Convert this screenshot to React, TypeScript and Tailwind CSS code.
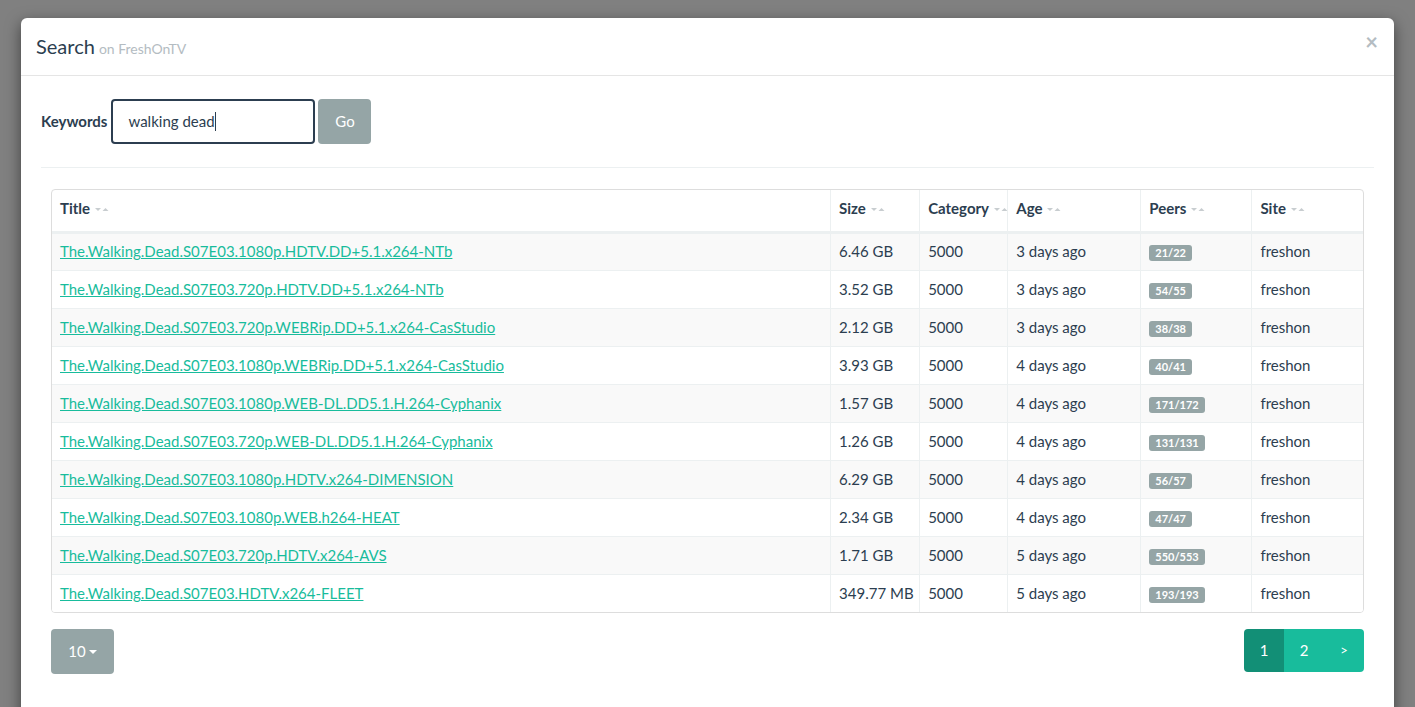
import React from "react";

// <---------- Sonuç satırları ---------------->
interface ResultRow {
  title: string;
  size: string;
  category: string;
  age: string;
  peers: string;
  site: string;
}

const rows: ResultRow[] = [
  { title: "The.Walking.Dead.S07E03.1080p.HDTV.DD+5.1.x264-NTb", size: "6.46 GB", category: "5000", age: "3 days ago", peers: "21/22", site: "freshon" },
  { title: "The.Walking.Dead.S07E03.720p.HDTV.DD+5.1.x264-NTb", size: "3.52 GB", category: "5000", age: "3 days ago", peers: "54/55", site: "freshon" },
  { title: "The.Walking.Dead.S07E03.720p.WEBRip.DD+5.1.x264-CasStudio", size: "2.12 GB", category: "5000", age: "3 days ago", peers: "38/38", site: "freshon" },
  { title: "The.Walking.Dead.S07E03.1080p.WEBRip.DD+5.1.x264-CasStudio", size: "3.93 GB", category: "5000", age: "4 days ago", peers: "40/41", site: "freshon" },
  { title: "The.Walking.Dead.S07E03.1080p.WEB-DL.DD5.1.H.264-Cyphanix", size: "1.57 GB", category: "5000", age: "4 days ago", peers: "171/172", site: "freshon" },
  { title: "The.Walking.Dead.S07E03.720p.WEB-DL.DD5.1.H.264-Cyphanix", size: "1.26 GB", category: "5000", age: "4 days ago", peers: "131/131", site: "freshon" },
  { title: "The.Walking.Dead.S07E03.1080p.HDTV.x264-DIMENSION", size: "6.29 GB", category: "5000", age: "4 days ago", peers: "56/57", site: "freshon" },
  { title: "The.Walking.Dead.S07E03.1080p.WEB.h264-HEAT", size: "2.34 GB", category: "5000", age: "4 days ago", peers: "47/47", site: "freshon" },
  { title: "The.Walking.Dead.S07E03.720p.HDTV.x264-AVS", size: "1.71 GB", category: "5000", age: "5 days ago", peers: "550/553", site: "freshon" },
  { title: "The.Walking.Dead.S07E03.HDTV.x264-FLEET", size: "349.77 MB", category: "5000", age: "5 days ago", peers: "193/193", site: "freshon" },
];
// <----------/  ----->

const columns = [
  { label: "Title", width: "w-[778px]" },
  { label: "Size", width: "w-[89px]" },
  { label: "Category", width: "w-[88px]" },
  { label: "Age", width: "w-[133px]" },
  { label: "Peers", width: "w-[111px]" },
  { label: "Site", width: "w-[111px]" },
];

function SortIcon() {
  return (
    <svg width="14" height="7" viewBox="0 0 14 7" className="inline-block ml-[5px] align-middle -mt-[2px]">
      <path d="M0 2 L6 2 L3 5 Z" fill="#c8cdd0" />
      <path d="M7.5 5 L13.5 5 L10.5 2 Z" fill="#c8cdd0" />
    </svg>
  );
}

function App() {
  return (
    <div
      className="h-[707px] w-[1415px] overflow-hidden bg-[#808080] pt-[18px] px-[21px] text-[#2c3e50]"
      style={{ fontFamily: "Lato, 'Open Sans', sans-serif" }}
    >
      <div className="bg-white rounded-[6px] shadow-[0_5px_15px_rgba(0,0,0,0.5)] h-[720px]">
        {/* header */}
        <div className="flex items-center justify-between px-[15px] h-[58px] border-b border-[#e5e5e5]">
          <div className="text-[20px] leading-[27px] mt-[1px]">
            Search<span className="text-[14px] text-[#b4bcc2] ml-[4px]">on FreshOnTV</span>
          </div>
          <button className="text-[22px] font-bold leading-none text-[#b4bcc2] -mt-[10px] mr-[1px]">×</button>
        </div>

        {/* body */}
        <div className="px-[20px] pt-[23px]">
          <div className="flex items-center">
            <label className="text-[15px] font-bold mr-[4px]">Keywords</label>
            <div className="w-[204px] h-[45px] border-2 border-[#2c3e50] rounded-[4px] flex items-center px-[15px] text-[15px]">
              walking dead<span className="inline-block w-px h-[19px] bg-[#2c3e50]" />
            </div>
            <button className="ml-[3px] w-[53px] h-[45px] rounded-[4px] bg-[#95a5a6] text-white text-[15px]">Go</button>
          </div>

          <div className="mt-[23px] border-t border-[#ecf0f1]" />

          <div className="pt-[21px] px-[10px]">
            <div className="border border-[#dddddd] rounded-[4px] overflow-hidden">
              <table className="w-full table-fixed border-collapse text-[15px]">
                <colgroup>
                  {columns.map((c) => (
                    <col key={c.label} className={c.width} />
                  ))}
                </colgroup>
                <thead>
                  <tr className="h-[42px] border-b-[3px] border-[#ecf0f1]">
                    {columns.map((c, i) => (
                      <th
                        key={c.label}
                        className={
                          "text-left font-bold px-[8px] pb-[4px] whitespace-nowrap overflow-hidden " +
                          (i > 0 ? "border-l border-[#ecf0f1]" : "")
                        }
                      >
                        {c.label}
                        <SortIcon />
                      </th>
                    ))}
                  </tr>
                </thead>
                <tbody>
                  {rows.map((r, idx) => (
                    <tr
                      key={idx}
                      className={
                        "h-[38px] " +
                        (idx > 0 ? "border-t border-[#ecf0f1] " : "") +
                        (idx % 2 === 0 ? "bg-[#f9f9f9]" : "bg-white")
                      }
                    >
                      <td className="px-[8px] whitespace-nowrap overflow-hidden">
                        <a href="#" className="text-[#18bc9c] underline">{r.title}</a>
                      </td>
                      <td className="px-[8px] border-l border-[#ecf0f1] whitespace-nowrap">{r.size}</td>
                      <td className="px-[8px] border-l border-[#ecf0f1]">{r.category}</td>
                      <td className="px-[8px] border-l border-[#ecf0f1]">{r.age}</td>
                      <td className="px-[8px] border-l border-[#ecf0f1]">
                        <span className="inline-block bg-[#95a5a6] text-white text-[11px] font-bold leading-[16px] px-[6px] rounded-[3px] mt-[2px]">
                          {r.peers}
                        </span>
                      </td>
                      <td className="px-[8px] border-l border-[#ecf0f1]">{r.site}</td>
                    </tr>
                  ))}
                </tbody>
              </table>
            </div>

            <div className="flex justify-between items-start mt-[16px]">
              <button className="w-[63px] h-[45px] rounded-[4px] bg-[#95a5a6] text-white text-[15px] flex items-center justify-center">
                10
                <span className="ml-[3px] inline-block w-0 h-0 border-l-[4px] border-r-[4px] border-t-[4px] border-l-transparent border-r-transparent border-t-white" />
              </button>
              <div className="flex h-[43px] text-white text-[15px]">
                <span className="w-[40px] flex items-center justify-center bg-[#128f76] rounded-l-[4px]">1</span>
                <span className="w-[40px] flex items-center justify-center bg-[#18bc9c]">2</span>
                <span className="w-[40px] flex items-center justify-center bg-[#18bc9c] rounded-r-[4px] text-[13px]">&gt;</span>
              </div>
            </div>
          </div>
        </div>
      </div>
    </div>
  );
}

export default App;
